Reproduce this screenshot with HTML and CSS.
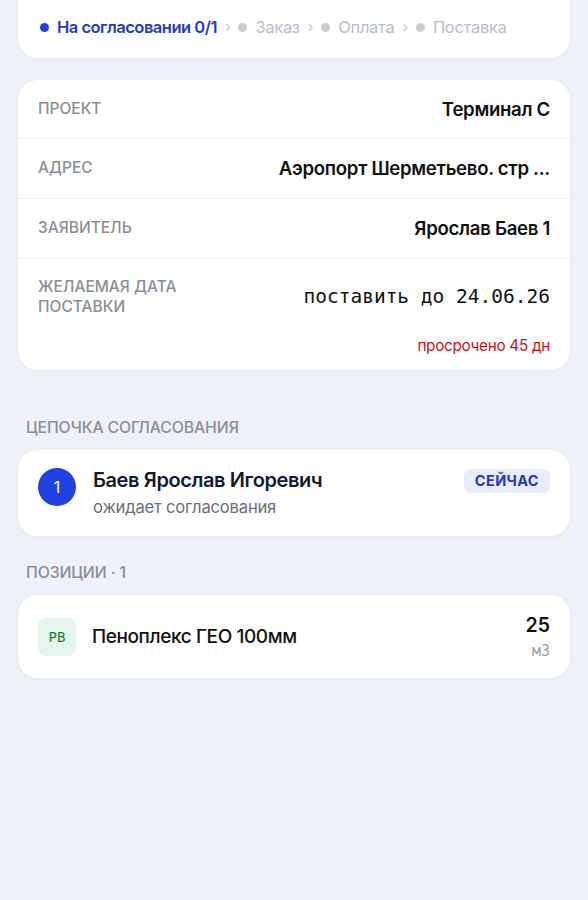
FILE: index.html
```html
<!DOCTYPE html>
<html lang="ru">
<head>
  <meta charset="UTF-8">
  <meta name="viewport" content="width=device-width, initial-scale=1.0">
  <title>Заявка</title>
  <link rel="stylesheet" href="styles.css">
</head>
<body>
  <div class="page">
    <!-- Статус заявки -->
    <div class="card stepper">
      <span class="step active"><i class="dot"></i>На согласовании 0/1</span>
      <span class="sep">›</span>
      <span class="step"><i class="dot"></i>Заказ</span>
      <span class="sep">›</span>
      <span class="step"><i class="dot"></i>Оплата</span>
      <span class="sep">›</span>
      <span class="step"><i class="dot"></i>Поставка</span>
    </div>

    <!-- Детали -->
    <div class="card details">
      <div class="row">
        <div class="label">Проект</div>
        <div class="value">Терминал С</div>
      </div>
      <div class="row">
        <div class="label">Адрес</div>
        <div class="value">Аэропорт Шерметьево. стр ...</div>
      </div>
      <div class="row">
        <div class="label">Заявитель</div>
        <div class="value">Ярослав Баев 1</div>
      </div>
      <div class="row row-date">
        <div class="row-main">
          <div class="label">Желаемая дата<br>поставки</div>
          <div class="value mono">поставить до 24.06.26</div>
        </div>
        <div class="overdue">просрочено 45 дн</div>
      </div>
    </div>

    <h4 class="section-title">Цепочка согласования</h4>
    <div class="card approver">
      <div class="num">1</div>
      <div class="approver-info">
        <div class="approver-name">Баев Ярослав Игоревич</div>
        <div class="approver-status">ожидает согласования</div>
      </div>
      <span class="badge">Сейчас</span>
    </div>

    <h4 class="section-title">Позиции · 1</h4>
    <div class="card item">
      <div class="item-icon">PB</div>
      <div class="item-name">Пеноплекс ГЕО 100мм</div>
      <div class="item-qty">
        <div class="qty">25</div>
        <div class="unit">м3</div>
      </div>
    </div>
  </div>
</body>
</html>
```

FILE: styles.css
```css
body {
  margin: 0;
  font-family: Inter, 'Noto Sans', Arial, sans-serif;
  background-color: #eef1f8;
  color: #111;
}
.page {
  padding: 0 18px 40px;
}
.card {
  background-color: #fff;
  border-radius: 20px;
  box-shadow: 0 1px 4px rgba(20, 30, 70, 0.05);
}
/* Шаги статуса */
.stepper {
  display: flex;
  align-items: center;
  gap: 8px;
  margin-top: -20px;
  padding: 37px 22px 21px;
  font-size: 16.5px;
  line-height: 20px;
  letter-spacing: -0.3px;
}
.step {
  display: flex;
  align-items: center;
  gap: 8px;
  color: #b9bcc7;
}
.step .dot {
  width: 9px;
  height: 9px;
  border-radius: 50%;
  background-color: #c9ccd5;
}
.step.active {
  color: #1f39cf;
  font-weight: 600;
  letter-spacing: -0.5px;
}
.step.active .dot {
  background-color: #1f3fe0;
}
.sep {
  color: #c3c6d0;
  font-size: 15px;
}
/* Таблица деталей */
.details {
  margin-top: 22px;
}
.row {
  display: flex;
  justify-content: space-between;
  align-items: center;
  padding: 19px 20px 20px;
  border-bottom: 1px solid #f0f1f5;
  line-height: 20px;
}
.row:first-child {
  padding-top: 19px;
  padding-bottom: 19px;
}
.row:last-child {
  border-bottom: none;
}
.label {
  color: #8b8e98;
  font-size: 15.5px;
  line-height: 20px;
  font-weight: 500;
  text-transform: uppercase;
  letter-spacing: 0;
}
.value {
  font-size: 18.6px;
  font-weight: 600;
  letter-spacing: -0.3px;
}
.value.mono {
  font-family: 'DejaVu Sans Mono', 'Liberation Mono', monospace;
  font-weight: normal;
  font-size: 19.5px;
  letter-spacing: 0;
}
.row-date {
  display: block;
  padding: 18px 20px 14px;
}
.row-main {
  display: flex;
  justify-content: space-between;
  align-items: center;
}
.overdue {
  margin-top: 19px;
  line-height: 20px;
  text-align: right;
  color: #c4121c;
  font-size: 15.3px;
  letter-spacing: -0.3px;
}
.section-title {
  margin: 48px 0 12px;
  padding-left: 8px;
  color: #8b8e98;
  font-size: 15.8px;
  line-height: 20px;
  font-weight: 500;
  text-transform: uppercase;
  letter-spacing: -0.1px;
}
.approver + .section-title {
  margin-top: 27px;
}
/* Цепочка согласования */
.approver {
  display: flex;
  align-items: flex-start;
  gap: 17px;
  padding: 18px 20px;
}
.num {
  width: 38px;
  height: 38px;
  flex-shrink: 0;
  border-radius: 50%;
  background-color: #2141e0;
  color: #fff;
  font-size: 16px;
  display: flex;
  align-items: center;
  justify-content: center;
}
.approver-info {
  flex: 1;
}
.approver-name {
  font-size: 20px;
  line-height: 24px;
  font-weight: 600;
  color: #111a2e;
  letter-spacing: -0.4px;
}
.approver-status {
  margin-top: 4px;
  font-size: 16.6px;
  line-height: 22px;
  color: #6b6e78;
  letter-spacing: -0.2px;
}
.badge {
  background-color: #e9ecfa;
  color: #2337c4;
  font-size: 14.5px;
  font-weight: 700;
  line-height: 16px;
  padding: 4px 11px;
  margin-top: 1px;
  border-radius: 7px;
  text-transform: uppercase;
  letter-spacing: 0.4px;
}
/* Позиции */
.item {
  display: flex;
  align-items: center;
  gap: 16px;
  padding: 18px 20px;
}
.item-icon {
  width: 38px;
  height: 38px;
  border-radius: 8px;
  background-color: #e4f6eb;
  color: #17803e;
  font-family: 'DejaVu Sans Mono', monospace;
  font-size: 14px;
  display: flex;
  align-items: center;
  justify-content: center;
}
.item-name {
  flex: 1;
  font-size: 19px;
  font-weight: 500;
  letter-spacing: -0.4px;
}
.item-qty {
  text-align: right;
}
.qty {
  font-size: 19.5px;
  line-height: 24px;
  font-weight: 600;
}
.unit {
  margin-top: 5px;
  font-family: 'DejaVu Sans Mono', monospace;
  font-size: 15px;
  line-height: 18px;
  color: #9a9da6;
}
```
